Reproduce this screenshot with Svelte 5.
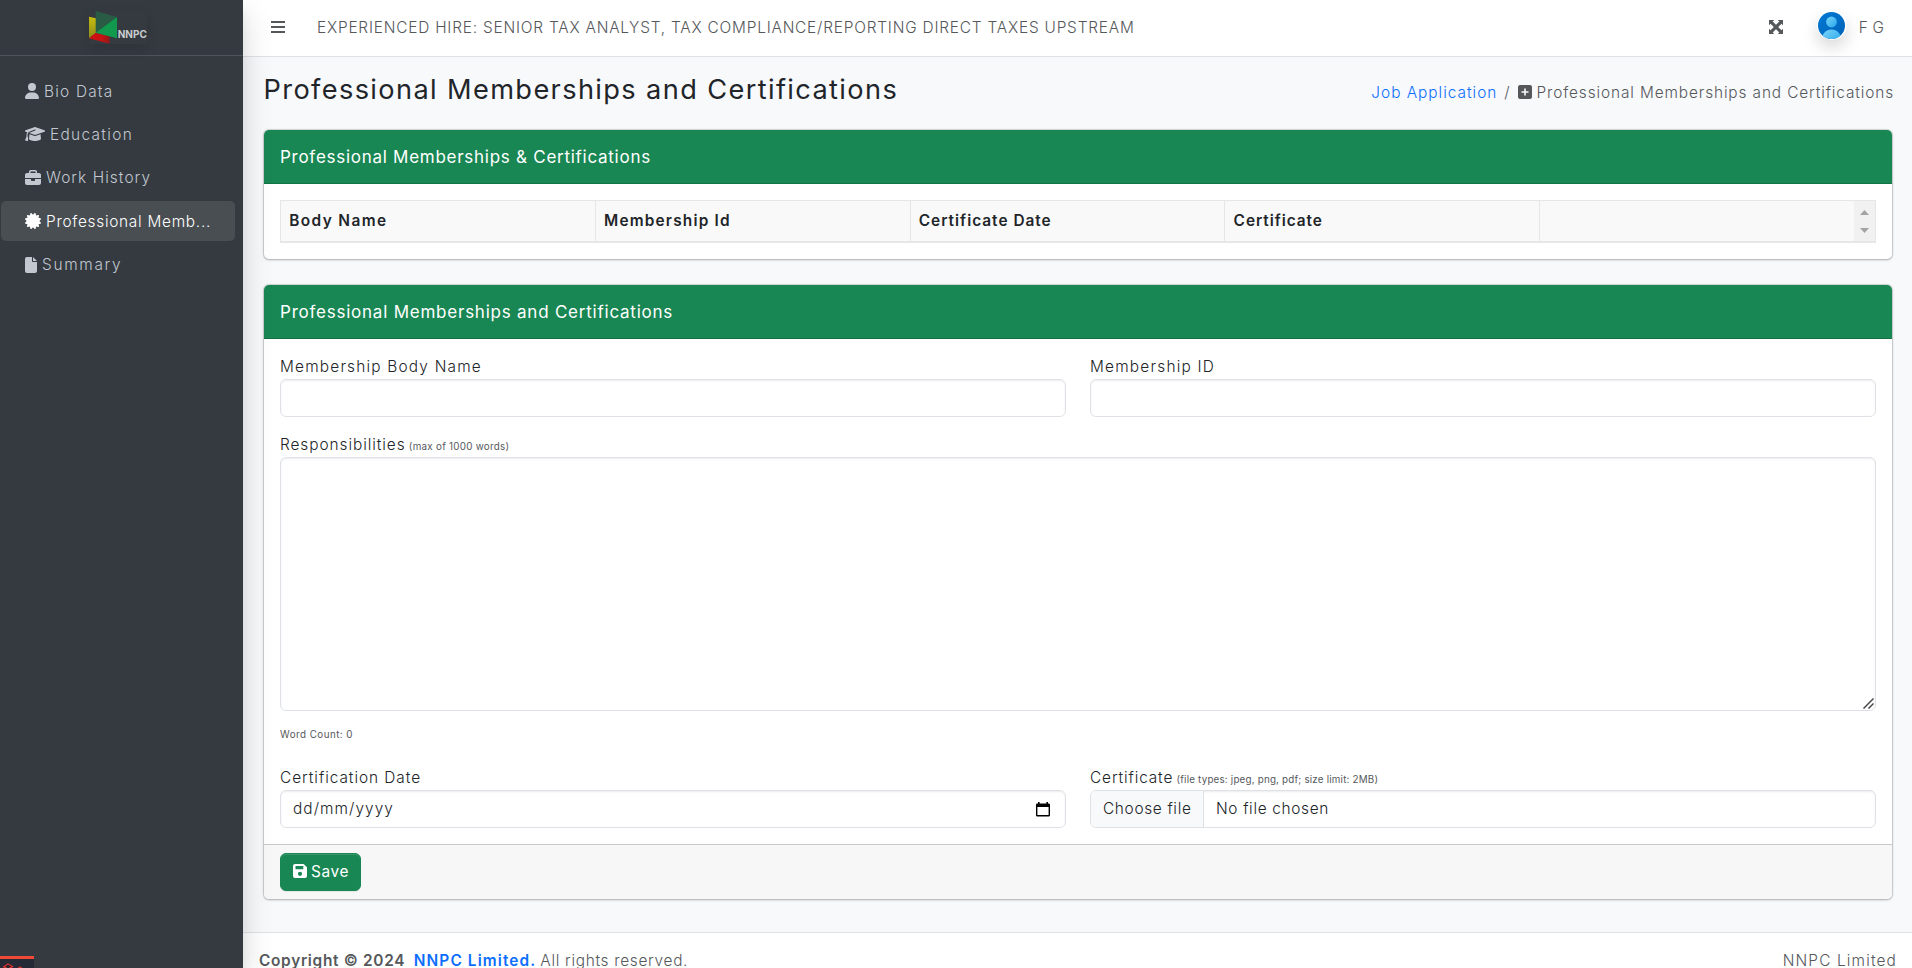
<script>
  const nav = [
    { label: 'Bio Data', box: '0 0 448 512', w: 14, ls: 1.21, d: 'M224 256A128 128 0 1 0 224 0a128 128 0 1 0 0 256zm-45.7 48C79.8 304 0 383.8 0 482.3C0 498.7 13.3 512 29.7 512H418.3c16.4 0 29.7-13.3 29.7-29.7C448 383.8 368.2 304 269.7 304H178.3z' },
    { label: 'Education', box: '0 0 640 512', w: 20, ls: 1.33, d: 'M320 32c-8.1 0-16.1 1.4-23.7 4.1L15.8 137.4C6.3 140.9 0 149.9 0 160s6.3 19.1 15.8 22.6l57.9 20.9C57.3 229.3 48 259.8 48 291.9v28.1c0 28.4-10.8 57.7-22.3 80.8c-6.5 13-13.9 25.8-22.5 37.6C0 442.7-.9 448.3 .9 453.4s6 8.9 11.2 10.2l64 16c4.2 1.1 8.7 .3 12.4-2s6.3-6.1 7.1-10.4c8.6-42.8 4.3-81.2-2.1-108.7C90.3 344.3 86 329.8 80 316.5V291.9c0-30.2 10.2-58.7 27.9-81.5c12.9-15.5 29.6-28 49.2-35.7l157-61.7c8.2-3.2 17.5 .8 20.7 9s-.8 17.5-9 20.7l-157 61.7c-12.4 4.9-23.3 12.4-32.2 21.6l159.6 57.6c7.6 2.7 15.6 4.1 23.7 4.1s16.1-1.4 23.7-4.1L624.2 182.6c9.5-3.4 15.8-12.5 15.8-22.6s-6.3-19.1-15.8-22.6L343.7 36.1C336.1 33.4 328.1 32 320 32zM128 408c0 35.3 86 72 192 72s192-36.7 192-72L496.7 262.6 354.5 314c-11.1 4-22.8 6-34.5 6s-23.5-2-34.5-6L143.3 262.6 128 408z' },
    { label: 'Work History', box: '0 0 512 512', w: 16, ls: 1.07, d: 'M184 48H328c4.4 0 8 3.6 8 8V96H176V56c0-4.4 3.6-8 8-8zm-56 8V96H64C28.7 96 0 124.7 0 160v96H192 320 512V160c0-35.3-28.7-64-64-64H384V56c0-30.9-25.1-56-56-56H184c-30.9 0-56 25.1-56 56zM512 288H320v32c0 17.7-14.3 32-32 32H224c-17.7 0-32-14.3-32-32V288H0V416c0 35.3 28.7 64 64 64H448c35.3 0 64-28.7 64-64V288z' },
    { label: 'Professional Memb...', box: '0 0 512 512', w: 16, ls: 0.73, active: true, d: 'M211 7.3C205 1 196-1.4 187.6 .8s-14.9 8.9-17.1 17.3L154.7 80.6l-62-17.5c-8.4-2.4-17.4 0-23.5 6.1s-8.5 15.1-6.1 23.5l17.5 62L18.1 170.6c-8.4 2.1-15 8.7-17.3 17.1S1 205 7.3 211l46.2 45L7.3 301C1 307-1.4 316 .8 324.4s8.9 14.9 17.3 17.1l62.5 15.8-17.5 62c-2.4 8.4 0 17.4 6.1 23.5s15.1 8.5 23.5 6.1l62-17.5 15.8 62.5c2.1 8.4 8.7 15 17.1 17.3s17.3-.2 23.4-6.4l45-46.2 45 46.2c6.1 6.2 15 8.7 23.4 6.4s14.9-8.9 17.1-17.3l15.8-62.5 62 17.5c8.4 2.4 17.4 0 23.5-6.1s8.5-15.1 6.1-23.5l-17.5-62 62.5-15.8c8.4-2.1 15-8.7 17.3-17.1s-.2-17.4-6.4-23.4l-46.2-45 46.2-45c6.2-6.1 8.7-15 6.4-23.4s-8.9-14.9-17.3-17.1l-62.5-15.8 17.5-62c2.4-8.4 0-17.4-6.1-23.5s-15.1-8.5-23.5-6.1l-62 17.5L341.4 18.1c-2.1-8.4-8.7-15-17.1-17.3S307 1 301 7.3L256 53.5 211 7.3z' },
    { label: 'Summary', box: '0 0 384 512', w: 12, ls: 1.7, d: 'M0 64C0 28.7 28.7 0 64 0H224V128c0 17.7 14.3 32 32 32H384V448c0 35.3-28.7 64-64 64H64c-35.3 0-64-28.7-64-64V64zm384 64H256V0L384 128z' }
  ];
  const columns = [
    { name: 'Body Name', ls: 1.4 },
    { name: 'Membership Id', ls: 1.2 },
    { name: 'Certificate Date', ls: 1.0 },
    { name: 'Certificate', ls: 0.96 },
    { name: '', ls: 0 }
  ];
</script>

<div class="app">
  <aside>
    <div class="brand">
      <svg class="logo" viewBox="87 33 174 98">
        <defs>
          <linearGradient id="ye" x1="0" y1="0" x2="0" y2="1"><stop offset="0" stop-color="#c9bd0c" /><stop offset="1" stop-color="#8b8c1c" /></linearGradient>
          <linearGradient id="re" x1="0" y1="0" x2="1" y2="0"><stop offset="0" stop-color="#d3100f" /><stop offset=".65" stop-color="#c51313" /><stop offset="1" stop-color="#8e1a1b" /></linearGradient>
        </defs>
        <polygon points="87,50 108,55 108,98 87,115" fill="url(#ye)" />
        <polygon points="87,115 108,98 149,109 149,131" fill="url(#re)" />
        <polygon points="107,33 171,51 107,98" fill="#2a5c45" />
        <polygon points="171,51 171,115 107,98" fill="#119a4e" />
        <text x="173" y="114.5" textLength="88" font-size="30" font-weight="700" fill="#c9cccf">NNPC</text>
      </svg>
    </div>
    <nav>
      {#each nav as n}
        <a href="#top" class:active={n.active} style:letter-spacing="{n.ls}px">
          <svg viewBox={n.box} width={n.w} height="16"><path d={n.d} /></svg><span>{n.label}</span>
        </a>
      {/each}
    </nav>
    <div class="debug">
      <svg width="34" height="12" viewBox="0 0 34 12" fill="none" stroke="#d8302f" stroke-width="1.2"><path d="M4 7.5 8 5l4.500 2.500L8 10zM4 7.500V12M12.500 7.500 10 10M17 10l3-2 3 2-3 2z" /></svg>
    </div>
  </aside>

  <div class="main">
    <header>
      <svg class="bars" viewBox="0 0 14 12" width="14" height="12"><path d="M0 0h14v2H0zM0 5h14v2H0zM0 10h14v2H0z" /></svg>
      <span class="job">EXPERIENCED HIRE: SENIOR TAX ANALYST, TAX COMPLIANCE/REPORTING DIRECT TAXES UPSTREAM</span>
      <svg class="expand" viewBox="0 0 14 14" width="14" height="14"><path d="M0 0h5.200L3.700 1.500 7 4.800 10.300 1.500 8.800 0H14v5.200L12.500 3.700 9.200 7l3.300 3.300L14 8.800V14H8.800l1.500-1.500L7 9.200l-3.300 3.300L5.200 14H0V8.800l1.500 1.500L4.800 7 1.500 3.700 0 5.200z" /></svg>
      <span class="avatar">
        <svg viewBox="0 0 27 27" width="27" height="27">
          <defs>
            <linearGradient id="bg" x1="0" y1="0" x2="1" y2="1"><stop offset="0" stop-color="#0078d4" /><stop offset="1" stop-color="#0063b8" /></linearGradient>
            <linearGradient id="fg" x1="0" y1="0" x2="1" y2="1"><stop offset="0" stop-color="#7ad4f9" /><stop offset="1" stop-color="#27a5ea" /></linearGradient>
            <clipPath id="round"><circle cx="13.5" cy="13.5" r="13.5" /></clipPath>
          </defs>
          <g clip-path="url(#round)">
            <rect width="27" height="27" fill="url(#bg)" />
            <circle cx="13.500" cy="10" r="5.400" fill="url(#fg)" />
            <ellipse cx="13.500" cy="25" rx="9" ry="7.500" fill="url(#fg)" />
          </g>
        </svg>
      </span>
      <span class="user">F G</span>
    </header>

    <div class="title">
      <h1>Professional Memberships and Certifications</h1>
      <div class="crumbs">
        <a href="#jobs">Job Application</a><i>/</i>
        <svg viewBox="0 0 14 14" width="14" height="14"><path fill-rule="evenodd" d="M2 0h10a2 2 0 0 1 2 2v10a2 2 0 0 1-2 2H2a2 2 0 0 1-2-2V2a2 2 0 0 1 2-2zM6.200 3.500v2.700H3.500v1.600h2.700v2.700h1.600V7.800h2.700V6.200H7.800V3.500z" /></svg>
        <span>Professional Memberships and Certifications</span>
      </div>
    </div>

    <section class="card first">
      <h2>Professional Memberships &amp; Certifications</h2>
      <div class="grid">
        <div class="cols">
          {#each columns as c}
            <div style:letter-spacing="{c.ls}px">{c.name}</div>
          {/each}
        </div>
        <div class="scroll">
          <svg width="9" height="5" viewBox="0 0 9 5"><path d="M4.500 0 9 5H0z" /></svg>
          <svg width="9" height="5" viewBox="0 0 9 5"><path d="M4.500 5 9 0H0z" /></svg>
        </div>
      </div>
    </section>

    <section class="card">
      <h2 class="wide">Professional Memberships and Certifications</h2>
      <div class="form">
        <div class="pair">
          <div class="field"><label for="body" class="l1">Membership Body Name</label><input id="body" class="control" /></div>
          <div class="field"><label for="mid" class="l2">Membership ID</label><input id="mid" class="control" /></div>
        </div>
        <div class="field resp">
          <label for="resp" class="l3">Responsibilities <small class="s1">(max of 1000 words)</small></label>
          <div class="area">
            <textarea id="resp"></textarea>
            <svg class="grip" width="11" height="11" viewBox="0 0 11 11"><path d="M.5 10.500l10-10M5.500 10.500l5-5" fill="none" stroke="#4a4a4a" stroke-width="1.500" /></svg>
          </div>
          <small class="count">Word Count: 0</small>
        </div>
        <div class="pair">
          <div class="field">
            <span class="label l4">Certification Date</span>
            <div class="control date"><span>dd/mm/yyyy</span>
              <svg viewBox="0 0 14 15" width="14" height="15"><path fill-rule="evenodd" d="M2 0h1.600v1.500h6.800V0H12v1.500h.7a1.300 1.300 0 0 1 1.300 1.300v10.400a1.300 1.300 0 0 1-1.300 1.300H1.300A1.300 1.300 0 0 1 0 13.200V2.800a1.300 1.300 0 0 1 1.300-1.300H2zM1.400 5v8.100h11.200V5z" /></svg>
            </div>
          </div>
          <div class="field">
            <span class="label l5">Certificate <small class="s2">(file types: jpeg, png, pdf; size limit: 2MB)</small></span>
            <div class="control file"><span class="choose">Choose file</span><span class="none">No file chosen</span></div>
          </div>
        </div>
      </div>
      <div class="actions">
        <button>
          <svg viewBox="0 0 14 14" width="14" height="14"><path fill-rule="evenodd" d="M2 0h8.600L14 3.300V12a2 2 0 0 1-2 2H2a2 2 0 0 1-2-2V2a2 2 0 0 1 2-2zM2.500 2v3.300h7.800V2zM7 7.700a2.100 2.100 0 1 0 0 4.200 2.100 2.100 0 0 0 0-4.200z" /></svg>Save
        </button>
      </div>
    </section>

    <footer>
      <div><b class="copy">Copyright © 2024</b><b class="link">NNPC Limited.</b><span class="rights">All rights reserved.</span></div>
      <span class="owner">NNPC Limited</span>
    </footer>
  </div>
</div>

<style>
  :global(body) { margin: 0; overflow: hidden; }
  .app { display: flex; height: 968px; overflow: hidden; font: 300 15.4px/24px Inter, sans-serif; color: #212529; background: #f8f9fb; }
  .app * { box-sizing: border-box; }
  svg { flex: none; fill: currentColor; }
  a { text-decoration: none; }

  aside { position: relative; z-index: 2; display: flex; flex-direction: column; flex: none; width: 243px; background: #343a40; box-shadow: 0 14px 28px rgba(0, 0, 0, .17), 0 10px 10px rgba(0, 0, 0, .04); }
  .brand { height: 56px; padding: 11px 0 0 89px; border-bottom: 1px solid #4b545c; }
  .logo { display: block; width: 58px; height: 32.670px; box-shadow: 0 5px 12px rgba(0, 0, 0, .12); }
  nav { flex: 1; display: flex; flex-direction: column; gap: 3.300px; padding: 15.600px 8px 0 1px; }
  nav a { display: flex; align-items: center; gap: 5px; height: 40px; padding: 0 0 0 24px; border-radius: 5px; color: #c2c7d0; white-space: nowrap; }
  nav a:nth-child(-n + 3) { padding-bottom: 1px; }
  nav a span { padding-top: 1px; }
  nav a.active { background: #494e52; color: #fff; }
  .debug { width: 34px; height: 12px; border-top: 3px solid #f04937; background: #252a37; overflow: hidden; }
  .debug svg { display: block; }

  .main { flex: 1; display: flex; flex-direction: column; min-width: 0; }
  header { display: flex; align-items: center; height: 57px; flex: none; padding: 0 28px 2px 28px; background: #fff; border-bottom: 1px solid #dee2e6; color: #55585b; }
  .bars { margin-right: 32px; }
  .job { padding-top: 2px; letter-spacing: .8px; white-space: nowrap; }
  .expand { margin-left: auto; }
  .avatar { width: 30px; height: 30px; margin: 0 12px 4px 33.500px; padding: 1.500px; border-radius: 50%; background: #fff; box-shadow: 0 8px 16px rgba(0, 0, 0, .15); }
  .avatar svg { display: block; }
  .user { padding-top: 2px; letter-spacing: .1px; }

  .title { display: flex; justify-content: space-between; height: 73px; flex: none; padding: 16px 18px 0 20.500px; }
  h1 { margin: 0; font-size: 27.200px; font-weight: 400; line-height: 33px; letter-spacing: 1.370px; white-space: nowrap; }
  .crumbs { display: flex; align-items: center; height: 24px; margin-top: 8px; color: #55585b; letter-spacing: .880px; white-space: nowrap; }
  .crumbs a { color: #0d6efd; letter-spacing: .990px; }
  .crumbs i { font-style: normal; margin: 0 7px 0 7px; }
  .crumbs svg { margin: 0 5px 2px 0; }

  .card { margin: 0 20px 26px 21px; border-radius: 5px; background: #fff; box-shadow: 0 0 1px 1px rgba(0, 0, 0, .14), 0 1px 3px rgba(0, 0, 0, .2); overflow: hidden; flex: none; }
  h2 { margin: 0; height: 54px; padding: 1px 16px 0; border-bottom: 1px solid #147343; background: #198754; color: #fff; font-size: 17px; font-weight: 400; line-height: 53px; letter-spacing: .730px; }
  h2.wide { letter-spacing: .770px; }
  .grid { display: flex; height: 43px; margin: 16px; border: 1px solid #e6e6e6; border-bottom-width: 2px; background: #f9f9f9; }
  .cols { flex: 1; display: grid; grid-template-columns: 314.800px 314.800px 314.800px 314.800px 1fr; font-weight: 600; line-height: 39px; }
  .cols div { padding-left: 8.200px; border-right: 1px solid #e6e6e6; }
  .cols div:last-child { border: 0; }
  .scroll { width: 21px; display: flex; flex-direction: column; align-items: center; justify-content: space-between; padding: 9px 0 8px; background: #f1f1f1; color: #a3a3a3; }

  .form { padding: 16px; }
  .pair { display: grid; grid-template-columns: 1fr 1fr; gap: 24px; }
  .field { display: flex; flex-direction: column; }
  label, .label { height: 24px; line-height: 24px; white-space: nowrap; }
  .control { width: 100%; height: 38px; border: 1px solid #dee2e6; border-radius: 6px; background: #fff; box-shadow: inset 0 1px 2px rgba(0, 0, 0, .075); outline: 0; }
  .resp { margin: 16px 0 0; height: 333px; }
  .area { position: relative; }
  textarea { display: block; height: 254px; width: 100%; border: 1px solid #dee2e6; border-radius: 6px; box-shadow: inset 0 1px 2px rgba(0, 0, 0, .075); resize: none; outline: 0; }
  .grip { position: absolute; right: 2px; bottom: 2px; }
  small { font-size: 9.800px; font-weight: 400; color: #55585b; }
  .count { margin-top: 12px; letter-spacing: .470px; }
  .l1 { letter-spacing: 1.200px; }
  .l2 { letter-spacing: 1.220px; }
  .l3 { letter-spacing: .940px; }
  .l4 { letter-spacing: .960px; }
  .l5 { letter-spacing: .880px; }
  .s1 { letter-spacing: .280px; margin-left: -2px; }
  .s2 { letter-spacing: .200px; margin-left: -2px; }
  .date { display: flex; align-items: center; justify-content: space-between; padding: 0 15px 0 12px; letter-spacing: 1.060px; }
  .date svg { color: #000; }
  .file { display: flex; line-height: 35px; overflow: hidden; }
  .choose { width: 113px; padding-left: 12px; border-right: 1px solid #dee2e6; background: #f8f9fb; letter-spacing: .670px; }
  .none { padding-left: 12px; letter-spacing: .670px; }
  .actions { height: 55px; padding: 8px 16px; border-top: 1px solid #c8c8c8; background: #f7f7f7; }
  button { display: flex; align-items: center; gap: 4px; width: 81px; height: 38px; padding: 0 0 2px 12px; border: 1px solid #198754; border-radius: 6px; background: #198754; box-shadow: inset 0 1px 0 rgba(255, 255, 255, .15), 0 1px 1px rgba(0, 0, 0, .075); color: #fff; font: 400 15.400px Inter, sans-serif; letter-spacing: .600px; }

  footer { display: flex; justify-content: space-between; flex: none; height: 57px; margin-top: 7px; padding: 16px; border-top: 1px solid #dee2e6; background: #fff; color: #55585b; white-space: nowrap; }
  footer b { font-weight: 600; }
  .copy { letter-spacing: .700px; }
  .link { margin: 0 4px 0 8.500px; color: #0d6efd; letter-spacing: 1.120px; }
  .rights { letter-spacing: .700px; }
  .owner { letter-spacing: 1.150px; margin-right: -1px; }
</style>
